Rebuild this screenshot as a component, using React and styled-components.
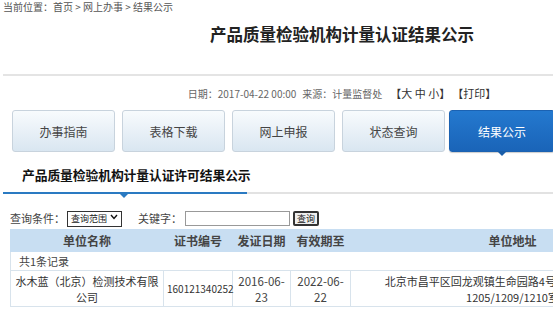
import React from "react";
import styled, { createGlobalStyle } from "styled-components";

const GlobalStyle = createGlobalStyle`
  html, body {
    margin: 0;
    padding: 0;
    background: #fff;
    overflow: hidden;
  }
  body {
    font-family: "Noto Sans CJK SC", "Noto Sans", sans-serif;
    color: #333;
  }
`;

const Page = styled.div`
  width: 678px;
  margin-left: 3px;
`;

const Crumb = styled.div`
  font-size: 10px;
  line-height: 14px;
  color: #555;
  height: 14px;
`;

const Title = styled.h1`
  margin: 0;
  padding-top: 9px;
  height: 48px;
  box-sizing: border-box;
  font-size: 16.5px;
  line-height: 22px;
  font-weight: bold;
  color: #222;
  text-align: center;
`;

const Rule = styled.div`
  height: 2px;
  background: #e4e4e4;
  margin-top: 12px;
`;

const Meta = styled.div`
  font-size: 10px;
  line-height: 14px;
  color: #666;
  text-align: center;
  margin-top: 10px;
  white-space: nowrap;
`;

const Bracket = styled.span`
  font-size: 11px;
  color: #333;
`;

const Gap = styled.span`
  display: inline-block;
  width: ${(p) => p.w}px;
`;

const Nav = styled.div`
  display: flex;
  gap: 7px;
  padding-left: 9px;
  margin-top: 9px;
`;

const NavButton = styled.div`
  position: relative;
  flex: none;
  width: ${(p) => (p.active ? 106 : 103)}px;
  height: 42px;
  box-sizing: border-box;
  display: flex;
  align-items: center;
  justify-content: center;
  font-size: 12px;
  border-radius: 3px;
  margin-left: ${(p) => (p.active ? "-3px" : "0")};
  border: 1px solid ${(p) => (p.active ? "#1b62b2" : "#c8d3dd")};
  color: ${(p) => (p.active ? "#fff" : "#444")};
  background: ${(p) =>
    p.active
      ? "linear-gradient(#2479cf, #1a64b8)"
      : "linear-gradient(#f8fbfd, #d9e6f1)"};
  box-shadow: ${(p) => (p.active ? "0 1px 1px rgba(0,0,0,0.2)" : "none")};

  &::after {
    content: "";
    display: ${(p) => (p.active ? "block" : "none")};
    position: absolute;
    left: 50%;
    bottom: -5px;
    margin-left: -5px;
    border-left: 5px solid transparent;
    border-right: 5px solid transparent;
    border-top: 5px solid #1a5ea9;
  }
`;

const Tabs = styled.div`
  display: flex;
  margin-top: 13px;
  border-bottom: 2px solid #e2e2e2;
`;

const Tab = styled.div`
  position: relative;
  width: 244px;
  box-sizing: border-box;
  padding-left: 19px;
  height: 29px;
  font-size: 12.8px;
  line-height: 20px;
  font-weight: bold;
  color: #111;
  white-space: nowrap;
  letter-spacing: -0.1px;
  border-bottom: 2px solid #2a7ac2;
  margin-bottom: -2px;

  &::after {
    content: "";
    position: absolute;
    left: 117px;
    bottom: -6px;
    border-left: 4px solid transparent;
    border-right: 4px solid transparent;
    border-top: 4px solid #2a7ac2;
  }
`;

const Search = styled.div`
  display: flex;
  align-items: center;
  padding-left: 7px;
  margin-top: 16px;
  height: 16px;
  font-size: 11px;
  color: #444;
`;

const Label = styled.span`
  margin-right: ${(p) => p.mr || 0}px;
`;

const SelectWrap = styled.span`
  position: relative;
  display: inline-block;
  margin: 0 16px 0 2px;
`;

const Select = styled.select`
  appearance: none;
  width: 55px;
  height: 16px;
  box-sizing: border-box;
  border: 1px solid #333;
  border-radius: 0;
  padding: 0 0 0 3px;
  font-family: inherit;
  font-size: 9px;
  color: #222;
  background: #fff;
  outline: none;
`;

const Chevron = styled.svg`
  position: absolute;
  right: 4px;
  top: 5px;
  pointer-events: none;
`;

const Input = styled.input`
  width: 105px;
  height: 15px;
  box-sizing: border-box;
  border: 1px solid #999;
  margin: 0 3px 0 3px;
  padding: 0;
`;

const SearchButton = styled.button`
  height: 15px;
  width: 26px;
  box-sizing: border-box;
  padding: 0;
  font-family: inherit;
  font-size: 9px;
  line-height: 11px;
  color: #222;
  background: #eee;
  border: 2px solid #333;
  border-radius: 2px;
`;

const Table = styled.table`
  border-collapse: collapse;
  margin: 3px 0 0 7px;
  table-layout: fixed;
  width: 664px;
  font-size: 11px;
  color: #333;
`;

const Th = styled.th`
  height: 21px;
  padding: 0;
  background: #c8def2;
  border: 1px solid #c8def2;
  font-size: 12px;
  font-weight: bold;
  color: #444;
  text-align: center;
  white-space: nowrap;
`;

const Td = styled.td`
  border: 1px solid #d8e3ec;
  padding: 0 3px;
  text-align: center;
  font-size: ${(p) => p.fs || 11}px;
  line-height: 16px;
  height: ${(p) => p.h || 18}px;
  color: ${(p) => p.color || "#333"};
  vertical-align: middle;
  white-space: nowrap;
  overflow: visible;
`;

const CountCell = styled.td`
  border: 1px solid #d8e3ec;
  padding: 0 0 0 8px;
  height: 18px;
  font-size: 11px;
  color: #444;
`;

const columns = [
  { title: "单位名称", w: 153 },
  { title: "证书编号", w: 69 },
  { title: "发证日期", w: 58 },
  { title: "有效期至", w: 60 },
  { title: "单位地址", w: 324 },
];

export default function App() {
  return (
    <Page>
      <GlobalStyle />
      <Crumb>当前位置：首页 &gt; 网上办事 &gt; 结果公示</Crumb>
      <Title>产品质量检验机构计量认证结果公示</Title>
      <Rule />
      <Meta>
        日期：2017-04-22 00:00<Gap w={6} />来源：计量监督处<Gap w={8} />
        <Bracket>【大 中 小】</Bracket>
        <Gap w={2} />
        <Bracket>【打印】</Bracket>
      </Meta>
      <Nav>
        <NavButton>办事指南</NavButton>
        <NavButton>表格下载</NavButton>
        <NavButton>网上申报</NavButton>
        <NavButton>状态查询</NavButton>
        <NavButton active>结果公示</NavButton>
      </Nav>
      <Tabs>
        <Tab>产品质量检验机构计量认证许可结果公示</Tab>
      </Tabs>
      <Search>
        <Label>查询条件：</Label>
        <SelectWrap>
          <Select defaultValue="all">
            <option value="all">查询范围</option>
          </Select>
          <Chevron width="8" height="6" viewBox="0 0 8 6">
            <path d="M1 1 L4 4.5 L7 1" fill="none" stroke="#111" strokeWidth="1.4" />
          </Chevron>
        </SelectWrap>
        <Label>关键字：</Label>
        <Input type="text" />
        <SearchButton>查询</SearchButton>
      </Search>
      <Table>
        <colgroup>
          {columns.map((c) => (
            <col key={c.title} style={{ width: c.w }} />
          ))}
        </colgroup>
        <thead>
          <tr>
            {columns.map((c) => (
              <Th key={c.title}>{c.title}</Th>
            ))}
          </tr>
        </thead>
        <tbody>
          <tr>
            <CountCell colSpan={5}>共1条记录</CountCell>
          </tr>
          <tr>
            <Td h={35}>
              水木蓝（北京）检测技术有限
              <br />
              公司
            </Td>
            <Td fs={10} h={35}>
              160121340252
            </Td>
            <Td h={35} fs={11.5} color="#444">
              2016-06-
              <br />
              23
            </Td>
            <Td h={35} fs={11.5} color="#444">
              2022-06-
              <br />
              22
            </Td>
            <Td h={35}>
              北京市昌平区回龙观镇生命园路4号院2号楼1层1单元
              <br />
              1205/1209/1210室
            </Td>
          </tr>
        </tbody>
      </Table>
    </Page>
  );
}
